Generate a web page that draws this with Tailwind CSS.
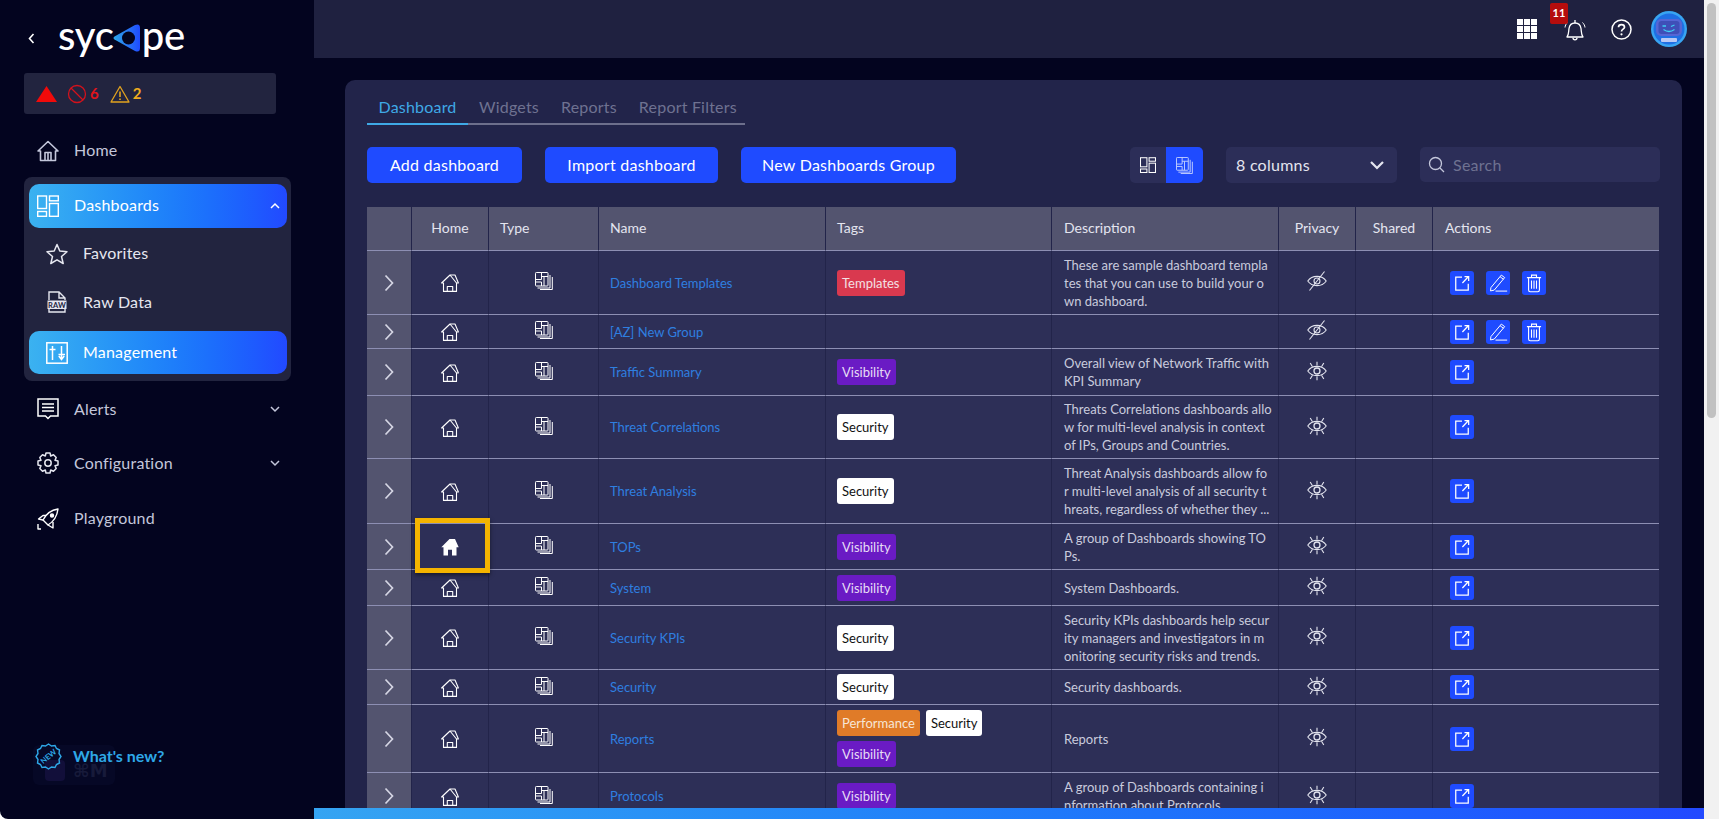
<!DOCTYPE html>
<html lang="en">

<head>
    <meta charset="UTF-8" />
    <title>Dashboards - Sycope</title>
    <script src="https://cdn.jsdelivr.net/npm/@tailwindcss/browser@4"></script>
</head>

<body class="bg-white h-[819px] overflow-hidden font-['Lato',sans-serif]">

    <!-- Shared icons -->
    <svg class="hidden">
        <symbol id="i-house" viewBox="0 0 18 18" fill="none" stroke="currentColor" stroke-width="1.100" stroke-linejoin="round">
            <path d="M0.600 9 9 1H14L17.400 9H15.500V17.400H2.500V9Z" />
            <path d="M9 1 15.500 9" />
            <path d="M6.300 17.400V12.500H11.700V17.400" />
        </symbol>
        <symbol id="i-house-solid" viewBox="0 0 18 18" fill="currentColor">
            <path d="M0.300 9.200 8.500 1H14L17.700 9.200H15.500V17.500H11V11.800H7V17.500H2.500V9.200Z" />
        </symbol>
        <symbol id="i-type" viewBox="0 0 18 18" fill="none" stroke="currentColor" stroke-width="1">
            <rect x="0.500" y="0.500" width="12.500" height="13.500" rx="0.800" />
            <path d="M6.500 0.500V7.500H0.500M0.500 10H6.500V14M6.500 4.500H13M9 4.500V14" />
            <path d="M15 3V16H2.500" />
            <path d="M17.300 5V17.500H5" />
        </symbol>
        <symbol id="i-eye" viewBox="0 0 20 20" fill="none" stroke="currentColor" stroke-width="1.100">
            <path d="M0.800 10C5 3.800 15 3.800 19.200 10 15 16.200 5 16.200 0.800 10Z" />
            <circle cx="10" cy="10" r="3" stroke-width="1.300" />
            <path d="M10 0.800V4.500M3.200 2 5.500 5.800M16.800 2 14.500 5.800M10 15.500V19.200M3.200 18 5.500 14.200M16.800 18 14.500 14.200" />
        </symbol>
        <symbol id="i-eye-off" viewBox="0 0 20 20" fill="none" stroke="currentColor" stroke-width="1.100">
            <path d="M0.800 10C5 3.800 15 3.800 19.200 10 15 16.200 5 16.200 0.800 10Z" />
            <circle cx="10" cy="10" r="3" />
            <path d="M2.500 19.500 17.500 0.500" />
        </symbol>
        <symbol id="i-open" viewBox="0 0 24 24" fill="none" stroke="white" stroke-width="1.500">
            <path d="M12 5H4.500V20.500H19.500V13" />
            <path d="M12.500 12 19.500 4.500M15 4.200H20V9.500" />
        </symbol>
        <symbol id="i-edit" viewBox="0 0 24 24" fill="none" stroke="white" stroke-width="1.200" stroke-linejoin="round">
            <path d="M3.500 17.500 16 2.500 20 5.500 7.500 20.500 3 21.500Z" />
            <path d="M14.500 4.500 18.500 7.500M9 21.700H23" />
        </symbol>
        <symbol id="i-trash" viewBox="0 0 24 24" fill="none" stroke="white" stroke-width="1.300">
            <path d="M3.500 5.500H20.500M9 5.500V2.500H15V5.500" />
            <path d="M5.500 5.500V20.500Q5.500 22.500 7.500 22.500H16.500Q18.500 22.500 18.500 20.500V5.500" />
            <path d="M9 9V19M12 9V19M15 9V19" />
        </symbol>
        <symbol id="i-right" viewBox="0 0 10 18" fill="none" stroke="currentColor" stroke-width="1.700">
            <path d="M1.500 1.500 8.500 9 1.500 16.500" />
        </symbol>
        <symbol id="i-down" viewBox="0 0 12 8" fill="none" stroke="currentColor" stroke-width="1.500">
            <path d="M2 2 6 6 10 2" />
        </symbol>
        <symbol id="i-dash" viewBox="0 0 22 22" fill="none" stroke="currentColor" stroke-width="1.400">
            <rect x="0.700" y="1" width="8.800" height="12.500" />
            <rect x="0.700" y="16.500" width="8.800" height="4.800" />
            <rect x="12.500" y="1" width="8.800" height="4.800" />
            <rect x="12.500" y="8.500" width="8.800" height="12.800" />
        </symbol>
    </svg>

    <div class="flex h-[819px]">

        <!-- Sidebar -->
        <aside class="relative w-[314px] shrink-0 h-full bg-[#03041f] rounded-bl-lg flex flex-col text-[16px] tracking-[0.2px] text-[#c4c7db]">
            <div class="flex items-center h-[32px] mt-[22px] pl-[28px]">
                <svg class="w-[7px] h-[11px] text-white" viewBox="0 0 7 11" fill="none" stroke="currentColor" stroke-width="1.600">
                    <path d="M5.500 1 1.500 5.500 5.500 10" />
                </svg>
                <div class="ml-[23px] flex items-center text-white text-[40px] font-medium leading-[32px] tracking-[-0.2px]">
                    <span class="-translate-y-[3px]">syc</span>
                    <svg class="w-[28px] h-[30px] -mx-[1px]" viewBox="0 0 28 30">
                        <defs>
                            <linearGradient id="logoFill" x1="0" y1="0" x2="1" y2="0">
                                <stop offset="0" stop-color="#2fa8e8" />
                                <stop offset="1" stop-color="#1f4bff" />
                            </linearGradient>
                        </defs>
                        <path d="M1.500 13.500 22 2Q27 0 27 5V25Q27 30 22 28L1.500 16.500Q-0.500 15 1.500 13.500Z" fill="url(#logoFill)" />
                        <circle cx="15.500" cy="15" r="6.500" fill="#03041f" />
                    </svg>
                    <span class="ml-[2px] -translate-y-[3px]">pe</span>
                </div>
            </div>

            <!-- Status box -->
            <div class="mt-[19px] ml-[24px] w-[252px] h-[41px] rounded-[3px] bg-[#22243f] flex items-center pl-[12px] font-bold text-[15px] tracking-normal">
                <svg class="w-[21px] h-[16px]" viewBox="0 0 21 16"><path d="M10.500 0 21 16H0Z" fill="#f00a0a" /></svg>
                <svg class="w-[20px] h-[20px] ml-[10px]" viewBox="0 0 20 20" fill="none" stroke="#d3121c" stroke-width="1.300">
                    <circle cx="10" cy="10" r="8.500" />
                    <path d="M4 4 16 16" />
                </svg>
                <span class="ml-[3px] text-[#e0151b]">6</span>
                <svg class="w-[20px] h-[18px] ml-[11px]" viewBox="0 0 20 18" fill="none" stroke="#e2a21f" stroke-width="1.300">
                    <path d="M10 1.500 19 17H1Z" stroke-linejoin="round" />
                    <path d="M10 6.500V12M10 13.500V15" stroke-width="1.600" />
                </svg>
                <span class="ml-[3px] text-[#f0ac1e]">2</span>
            </div>

            <a class="mt-[15px] ml-[29px] h-[44px] flex items-center pl-[8px] gap-[15px]">
                <svg class="w-[22px] h-[22px]" viewBox="0 0 22 22" fill="none" stroke="currentColor" stroke-width="1.600" stroke-linejoin="round">
                    <path d="M1 11 11 1.500 21 11H18.500V20.500H3.500V11Z" />
                    <path d="M8 20.500V12.500H14V20.500M11 12.500V20.500" />
                </svg>
                <span class="-mt-[2px]">Home</span>
            </a>

            <!-- Dashboards group -->
            <div class="mt-[4px] ml-[24px] w-[267px] h-[204px] rounded-lg bg-[#22243f] p-[7px_5px]">
                <a class="h-[44px] w-[258px] rounded-[10px] bg-gradient-to-r from-[#3bb2f0] to-[#2249ff] text-white flex items-center pl-[8px] gap-[15px]">
                    <svg class="w-[22px] h-[22px]"><use href="#i-dash" /></svg>
                    <span class="-mt-[2px]">Dashboards</span>
                    <svg class="w-[12px] h-[8px] ml-auto mr-[6px] rotate-180"><use href="#i-down" /></svg>
                </a>
                <a class="mt-[2px] h-[48px] flex items-center pl-[17px] gap-[15px] text-[#e6e7f0]">
                    <svg class="w-[22px] h-[22px]" viewBox="0 0 22 22" fill="none" stroke="currentColor" stroke-width="1.500" stroke-linejoin="round">
                        <path d="M11 1.500 13.800 8 21 8.700 15.500 13.500 17.200 20.500 11 16.800 4.800 20.500 6.500 13.500 1 8.700 8.200 8Z" />
                    </svg>
                    <span class="-mt-[2px]">Favorites</span>
                </a>
                <a class="h-[48px] flex items-center pl-[18px] gap-[16px] text-[#e6e7f0]">
                    <svg class="w-[20px] h-[22px]" viewBox="0 0 20 22" fill="none" stroke="currentColor" stroke-width="1.400">
                        <path d="M2 9V1H12L18 7V9M12 1V7H18M2 18V21H18V18" />
                        <rect x="0.500" y="9.500" width="19" height="8.500" fill="currentColor" stroke="none" />
                        <text x="10" y="16.600" text-anchor="middle" font-size="7.500" font-weight="700" fill="#22243f" stroke="none">RAW</text>
                    </svg>
                    <span>Raw Data</span>
                </a>
                <a class="mt-[5px] h-[43px] w-[258px] rounded-[10px] bg-gradient-to-r from-[#3bb2f0] to-[#2249ff] text-white flex items-center pl-[17px] gap-[15px]">
                    <svg class="w-[22px] h-[22px]" viewBox="0 0 22 22" fill="none" stroke="currentColor" stroke-width="1.500">
                        <rect x="0.800" y="0.800" width="20.400" height="20.400" />
                        <path d="M6.500 4V18M3.500 7.500H9.500M15.500 4V17M12.500 12.500H19M12.800 14 15.500 17.500 18.200 14" />
                    </svg>
                    <span class="-mt-[2px]">Management</span>
                </a>
            </div>

            <a class="mt-[6px] ml-[29px] w-[258px] h-[44px] flex items-center pl-[8px] gap-[15px]">
                <svg class="w-[22px] h-[22px] text-white" viewBox="0 0 22 22" fill="none" stroke="currentColor" stroke-width="1.500">
                    <path d="M1 1H21V18H13.500L11 20.500 8.500 18H1Z" />
                    <path d="M5 6H17M5 9.500H17M5 13H17" />
                </svg>
                <span>Alerts</span>
                <svg class="w-[12px] h-[8px] ml-auto mr-[6px]"><use href="#i-down" /></svg>
            </a>
            <a class="mt-[10px] ml-[29px] w-[258px] h-[44px] flex items-center pl-[8px] gap-[15px]">
                <svg class="w-[22px] h-[22px] text-[#e6e7f0]" viewBox="0 0 22 22" fill="none" stroke="currentColor" stroke-width="1.500" stroke-linejoin="round">
                    <path d="M9 1H13L13.700 4 16.500 2.800 19.200 5.500 18 8.300 21 9V13L18 13.700 19.200 16.500 16.500 19.200 13.700 18 13 21H9L8.300 18 5.500 19.200 2.800 16.500 4 13.700 1 13V9L4 8.300 2.800 5.500 5.500 2.800 8.300 4Z" />
                    <circle cx="11" cy="11" r="3.200" />
                </svg>
                <span>Configuration</span>
                <svg class="w-[12px] h-[8px] ml-auto mr-[6px]"><use href="#i-down" /></svg>
            </a>
            <a class="mt-[12px] ml-[29px] w-[258px] h-[44px] flex items-center pl-[8px] gap-[15px]">
                <svg class="w-[22px] h-[22px] text-white" viewBox="0 0 22 22" fill="none" stroke="currentColor" stroke-width="1.400" stroke-linejoin="round">
                    <path d="M21 1C14 2 9 6 6 12L11 17C16 14 20 9 21 1Z" />
                    <path d="M6 12 1.500 11 6 7.500H9M11 17 16 20V14" />
                    <circle cx="15" cy="7.500" r="1.500" fill="currentColor" />
                    <path d="M1 16V21H4" />
                </svg>
                <span class="-mt-[2px]">Playground</span>
            </a>

            <!-- Keyboard hint behind the What's new link -->
            <div class="absolute left-[33px] top-[745px] w-[82px] h-[40px] rounded-md bg-[#060826] flex items-center">
                <div class="ml-[12px] w-[20px] h-[21px] mt-[10px] rounded bg-[#120f3a]"></div>
                <span class="ml-[8px] mt-[10px] font-['DejaVu_Sans',sans-serif] font-bold text-[18px] tracking-normal text-[#171a3a]">⌘M</span>
            </div>
            <a class="absolute left-[35px] top-[743px] h-[26px] flex items-center gap-[11px] font-bold text-[#2ea8e8] text-[16px] tracking-normal">
                <svg class="w-[27px] h-[27px]" viewBox="0 0 27 27" fill="none" stroke="currentColor" stroke-width="1.400">
                    <path d="M13.500 1 16.500 3 20 2.500 21.500 5.500 24.500 7 24 10.500 26 13.500 24 16.500 24.500 20 21.500 21.500 20 24.500 16.500 24 13.500 26 10.500 24 7 24.500 5.500 21.500 2.500 20 3 16.500 1 13.500 3 10.500 2.500 7 5.500 5.500 7 2.500 10.500 3Z" />
                    <text x="13.500" y="16" text-anchor="middle" font-size="7.500" font-weight="700" fill="currentColor" stroke="none" transform="rotate(-40 13.500 13.500)">NEW</text>
                </svg>
                <span>What's new?</span>
            </a>
        </aside>

        <!-- Main area -->
        <main class="relative flex-1 min-w-0 bg-[#03041f] overflow-hidden">
            <header class="h-[58px] bg-[#1f2140] flex items-center justify-end text-white">
                <svg class="w-[20px] h-[20px]" viewBox="0 0 20 20" fill="white">
                    <rect width="6" height="6" /><rect x="7" width="6" height="6" /><rect x="14" width="6" height="6" />
                    <rect y="7" width="6" height="6" /><rect x="7" y="7" width="6" height="6" /><rect x="14" y="7" width="6" height="6" />
                    <rect y="14" width="6" height="6" /><rect x="7" y="14" width="6" height="6" /><rect x="14" y="14" width="6" height="6" />
                </svg>
                <div class="relative ml-[27px] w-[22px] h-[23px] mt-[2px]">
                    <svg class="w-[22px] h-[23px]" viewBox="0 0 22 23" fill="none" stroke="white" stroke-width="1.300">
                        <path d="M3 18C5 15.500 4.500 12.500 5 9.500 5.500 6 8 4 11 4S16.500 6 17 9.500C17.500 12.500 17 15.500 19 18Z" stroke-linejoin="round" />
                        <path d="M11 1V4M9 18.800A2 2 0 0 0 13 18.800" />
                        <path d="M18.500 3.500C20 5 20.800 6.500 21 8.500M3.500 3.500C2 5 1.200 6.500 1 8.500" stroke-width="1" />
                    </svg>
                    <span class="absolute -top-[16px] -left-[14px] w-[18px] h-[21px] rounded-[2px] bg-[#b50d0d] text-white text-[11px] font-bold flex items-center justify-center">11</span>
                </div>
                <svg class="ml-[25px] w-[21px] h-[21px]" viewBox="0 0 21 21" fill="none" stroke="white" stroke-width="1.500">
                    <circle cx="10.500" cy="10.500" r="9.500" />
                    <path d="M7.500 8.200C7.500 4.800 13.500 4.800 13.500 8.200 13.500 10.200 10.500 10.200 10.500 12.500" stroke-width="1.700" />
                    <circle cx="10.500" cy="15.300" r="1.100" fill="white" stroke="none" />
                </svg>
                <svg class="ml-[19px] mr-[17px] w-[36px] h-[36px]" viewBox="0 0 36 36">
                    <circle cx="18" cy="18" r="18" fill="#38a5f2" />
                    <circle cx="18" cy="18" r="15.500" fill="#1f6fe4" />
                    <rect x="5" y="8" width="26" height="17" rx="5" fill="#5566d4" />
                    <rect x="7.500" y="10" width="21" height="13" rx="3" fill="#3f4fb8" />
                    <path d="M11.500 15H15M20 15.500 23.500 14M12.500 18.500Q18 22.500 23.500 18.500" fill="none" stroke="#3fd0f5" stroke-width="1.300" />
                    <rect x="10" y="27" width="16" height="4" rx="1" fill="#b9c9f5" />
                </svg>
            </header>

            <div class="pt-[22px] pl-[31px] pr-[22px]">
                <section class="w-[1337px] h-[800px] rounded-[10px] bg-[#22244a] pl-[22px] pt-[12px]">

                    <!-- Tabs -->
                    <nav class="w-[378px] h-[33px] border-b-2 border-[#6d6f8c] flex whitespace-nowrap text-[16px] tracking-[0.2px] text-[#6f7291]">
                        <a class="h-[33px] w-[101px] text-center pt-[3px] border-b-2 border-[#3fa9e6] text-[#3fa9e6]">Dashboard</a>
                        <a class="pl-[11px] pr-[11px] pt-[3px]">Widgets</a>
                        <a class="pl-[11px] pr-[11px] pt-[3px]">Reports</a>
                        <a class="pl-[11px] pt-[3px]">Report Filters</a>
                    </nav>

                    <!-- Toolbar -->
                    <div class="mt-[22px] flex h-[36px] w-[1293px] text-white text-[16px] tracking-[0.25px]">
                        <button class="w-[155px] rounded-[5px] bg-[#1f4bff]">Add dashboard</button>
                        <button class="ml-[23px] w-[173px] rounded-[5px] bg-[#1f4bff]">Import dashboard</button>
                        <button class="ml-[23px] w-[215px] rounded-[5px] bg-[#1f4bff]">New Dashboards Group</button>
                        <div class="ml-auto w-[73px] rounded-[5px] bg-[#2c2e58] flex overflow-hidden">
                            <span class="w-[36px] flex items-center justify-center">
                                <svg class="w-[16px] h-[16px] text-white"><use href="#i-dash" /></svg>
                            </span>
                            <span class="w-[37px] bg-[#1f4bff] flex items-center justify-center text-[#c5d1ff]">
                                <svg class="w-[17px] h-[17px]"><use href="#i-type" /></svg>
                            </span>
                        </div>
                        <div class="ml-[23px] w-[171px] rounded-[5px] bg-[#2c2e58] flex items-center pl-[10px] text-[#e4e5ef]">
                            <span>8 columns</span>
                            <svg class="ml-auto mr-[11px] w-[18px] h-[12px]"><use href="#i-down" /></svg>
                        </div>
                        <div class="ml-[23px] w-[240px] h-[35px] rounded-[5px] bg-[#2c2e58] flex items-center pl-[8px] text-[#6f7291]">
                            <svg class="w-[17px] h-[17px] text-[#c4c7db]" viewBox="0 0 17 17" fill="none" stroke="currentColor" stroke-width="1.300">
                                <circle cx="7.500" cy="7.500" r="6" />
                                <path d="M12 12 16 16" />
                            </svg>
                            <span class="ml-[8px]">Search</span>
                        </div>
                    </div>

                    <!-- Dashboards table -->
                    <div class="relative mt-[24px] w-[1292px]">
                        <table class="table-fixed w-[1292px] border-separate border-spacing-0 text-[13px] text-[#c9cbdd]">
                            <colgroup>
                                <col class="w-[44px]" /><col class="w-[77px]" /><col class="w-[110px]" /><col class="w-[227px]" /><col class="w-[226px]" /><col class="w-[227px]" /><col class="w-[77px]" /><col class="w-[77px]" /><col class="w-[227px]" />
                            </colgroup>
                            <thead class="bg-[#53546f] text-[#e4e5ef] text-[14px] font-normal text-left">
                                <tr class="h-[44px]">
                                    <th class="font-normal border-b border-[#8d8fb3]"></th>
                                    <th class="font-normal pb-[2px] border-b border-l border-b-[#8d8fb3] border-l-[#22244a] text-center">Home</th>
                                    <th class="font-normal pb-[2px] border-b border-l border-b-[#8d8fb3] border-l-[#22244a] pl-[11px]">Type</th>
                                    <th class="font-normal pb-[2px] border-b border-l border-b-[#8d8fb3] border-l-[#22244a] pl-[11px]">Name</th>
                                    <th class="font-normal pb-[2px] border-b border-l border-b-[#8d8fb3] border-l-[#22244a] pl-[11px]">Tags</th>
                                    <th class="font-normal pb-[2px] border-b border-l border-b-[#8d8fb3] border-l-[#22244a] pl-[12px]">Description</th>
                                    <th class="font-normal pb-[2px] border-b border-l border-b-[#8d8fb3] border-l-[#22244a] text-center">Privacy</th>
                                    <th class="font-normal pb-[2px] border-b border-l border-b-[#8d8fb3] border-l-[#22244a] text-center">Shared</th>
                                    <th class="font-normal pb-[2px] border-b border-l border-b-[#8d8fb3] border-l-[#22244a] pl-[12px]">Actions</th>
                                </tr>
                            </thead>
                            <tbody class="bg-[#2d2f57] [&_td]:border-b [&_td]:border-b-[#8d8fb3] [&_td+td]:border-l [&_td+td]:border-l-[#22244a]">
                                <tr class="h-[64px]">
                                    <td class="bg-[#53546f] text-[#d5d6e4]"><svg class="w-[10px] h-[18px] mx-auto"><use href="#i-right" /></svg></td>
                                    <td class="text-white"><svg class="w-[18px] h-[18px] mx-auto mt-[1px]"><use href="#i-house" /></svg></td>
                                    <td class="text-white"><svg class="w-[18px] h-[18px] mx-auto -mt-[3px]"><use href="#i-type" /></svg></td>
                                    <td class="pl-[11px] pt-[2px] text-[#2f7fe0]">Dashboard Templates</td>
                                    <td class="pl-[11px]"><span class="inline-block h-[26px] leading-[26px] px-[5px] rounded-[3px] bg-[#d9394f] text-[#f3e0e4]">Templates</span></td>
                                    <td class="pl-[12px] leading-[18px] whitespace-nowrap">These are sample dashboard templa<br />tes that you can use to build your o<br />wn dashboard.</td>
                                    <td class="text-[#e4e5ef]"><svg class="w-[20px] h-[20px] mx-auto -mt-[3px]"><use href="#i-eye-off" /></svg></td>
                                    <td></td>
                                    <td class="pl-[17px]"><div class="flex gap-[12px]">
                                        <span class="w-[24px] h-[24px] rounded-[3px] bg-[#1f4bff] flex items-center justify-center"><svg class="w-[20px] h-[20px]"><use href="#i-open" /></svg></span>
                                        <span class="w-[24px] h-[24px] rounded-[3px] bg-[#1f4bff] flex items-center justify-center"><svg class="w-[20px] h-[20px]"><use href="#i-edit" /></svg></span>
                                        <span class="w-[24px] h-[24px] rounded-[3px] bg-[#1f4bff] flex items-center justify-center"><svg class="w-[20px] h-[20px]"><use href="#i-trash" /></svg></span>
                                    </div></td>
                                </tr>
                                <tr class="h-[34px]">
                                    <td class="bg-[#53546f] text-[#d5d6e4]"><svg class="w-[10px] h-[18px] mx-auto"><use href="#i-right" /></svg></td>
                                    <td class="text-white"><svg class="w-[18px] h-[18px] mx-auto mt-[1px]"><use href="#i-house" /></svg></td>
                                    <td class="text-white"><svg class="w-[18px] h-[18px] mx-auto -mt-[3px]"><use href="#i-type" /></svg></td>
                                    <td class="pl-[11px] pt-[2px] text-[#2f7fe0]">[AZ] New Group</td>
                                    <td></td>
                                    <td></td>
                                    <td class="text-[#e4e5ef]"><svg class="w-[20px] h-[20px] mx-auto -mt-[3px]"><use href="#i-eye-off" /></svg></td>
                                    <td></td>
                                    <td class="pl-[17px]"><div class="flex gap-[12px]">
                                        <span class="w-[24px] h-[24px] rounded-[3px] bg-[#1f4bff] flex items-center justify-center"><svg class="w-[20px] h-[20px]"><use href="#i-open" /></svg></span>
                                        <span class="w-[24px] h-[24px] rounded-[3px] bg-[#1f4bff] flex items-center justify-center"><svg class="w-[20px] h-[20px]"><use href="#i-edit" /></svg></span>
                                        <span class="w-[24px] h-[24px] rounded-[3px] bg-[#1f4bff] flex items-center justify-center"><svg class="w-[20px] h-[20px]"><use href="#i-trash" /></svg></span>
                                    </div></td>
                                </tr>
                                <tr class="h-[47px]">
                                    <td class="bg-[#53546f] text-[#d5d6e4]"><svg class="w-[10px] h-[18px] mx-auto"><use href="#i-right" /></svg></td>
                                    <td class="text-white"><svg class="w-[18px] h-[18px] mx-auto mt-[1px]"><use href="#i-house" /></svg></td>
                                    <td class="text-white"><svg class="w-[18px] h-[18px] mx-auto -mt-[3px]"><use href="#i-type" /></svg></td>
                                    <td class="pl-[11px] pt-[2px] text-[#2f7fe0]">Traffic Summary</td>
                                    <td class="pl-[11px]"><span class="inline-block h-[26px] leading-[26px] px-[5px] rounded-[3px] bg-[#6a1bc4] text-[#e6dcf5]">Visibility</span></td>
                                    <td class="pl-[12px] leading-[18px] whitespace-nowrap">Overall view of Network Traffic with<br />KPI Summary</td>
                                    <td class="text-[#e4e5ef]"><svg class="w-[20px] h-[20px] mx-auto -mt-[3px]"><use href="#i-eye" /></svg></td>
                                    <td></td>
                                    <td class="pl-[17px]"><span class="w-[24px] h-[24px] rounded-[3px] bg-[#1f4bff] flex items-center justify-center"><svg class="w-[20px] h-[20px]"><use href="#i-open" /></svg></span></td>
                                </tr>
                                <tr class="h-[63px]">
                                    <td class="bg-[#53546f] text-[#d5d6e4]"><svg class="w-[10px] h-[18px] mx-auto"><use href="#i-right" /></svg></td>
                                    <td class="text-white"><svg class="w-[18px] h-[18px] mx-auto mt-[1px]"><use href="#i-house" /></svg></td>
                                    <td class="text-white"><svg class="w-[18px] h-[18px] mx-auto -mt-[3px]"><use href="#i-type" /></svg></td>
                                    <td class="pl-[11px] pt-[2px] text-[#2f7fe0]">Threat Correlations</td>
                                    <td class="pl-[11px]"><span class="inline-block h-[26px] leading-[26px] px-[5px] rounded-[3px] bg-white text-[#111]">Security</span></td>
                                    <td class="pl-[12px] leading-[18px] whitespace-nowrap">Threats Correlations dashboards allo<br />w for multi-level analysis in context<br />of IPs, Groups and Countries.</td>
                                    <td class="text-[#e4e5ef]"><svg class="w-[20px] h-[20px] mx-auto -mt-[3px]"><use href="#i-eye" /></svg></td>
                                    <td></td>
                                    <td class="pl-[17px]"><span class="w-[24px] h-[24px] rounded-[3px] bg-[#1f4bff] flex items-center justify-center"><svg class="w-[20px] h-[20px]"><use href="#i-open" /></svg></span></td>
                                </tr>
                                <tr class="h-[65px]">
                                    <td class="bg-[#53546f] text-[#d5d6e4]"><svg class="w-[10px] h-[18px] mx-auto"><use href="#i-right" /></svg></td>
                                    <td class="text-white"><svg class="w-[18px] h-[18px] mx-auto mt-[1px]"><use href="#i-house" /></svg></td>
                                    <td class="text-white"><svg class="w-[18px] h-[18px] mx-auto -mt-[3px]"><use href="#i-type" /></svg></td>
                                    <td class="pl-[11px] pt-[2px] text-[#2f7fe0]">Threat Analysis</td>
                                    <td class="pl-[11px]"><span class="inline-block h-[26px] leading-[26px] px-[5px] rounded-[3px] bg-white text-[#111]">Security</span></td>
                                    <td class="pl-[12px] leading-[18px] whitespace-nowrap">Threat Analysis dashboards allow fo<br />r multi-level analysis of all security t<br />hreats, regardless of whether they ...</td>
                                    <td class="text-[#e4e5ef]"><svg class="w-[20px] h-[20px] mx-auto -mt-[3px]"><use href="#i-eye" /></svg></td>
                                    <td></td>
                                    <td class="pl-[17px]"><span class="w-[24px] h-[24px] rounded-[3px] bg-[#1f4bff] flex items-center justify-center"><svg class="w-[20px] h-[20px]"><use href="#i-open" /></svg></span></td>
                                </tr>
                                <tr class="h-[46px]">
                                    <td class="bg-[#53546f] text-[#d5d6e4]"><svg class="w-[10px] h-[18px] mx-auto"><use href="#i-right" /></svg></td>
                                    <td class="text-white"><svg class="w-[18px] h-[18px] mx-auto"><use href="#i-house-solid" /></svg></td>
                                    <td class="text-white"><svg class="w-[18px] h-[18px] mx-auto -mt-[3px]"><use href="#i-type" /></svg></td>
                                    <td class="pl-[11px] pt-[2px] text-[#2f7fe0]">TOPs</td>
                                    <td class="pl-[11px]"><span class="inline-block h-[26px] leading-[26px] px-[5px] rounded-[3px] bg-[#6a1bc4] text-[#e6dcf5]">Visibility</span></td>
                                    <td class="pl-[12px] leading-[18px] whitespace-nowrap">A group of Dashboards showing TO<br />Ps.</td>
                                    <td class="text-[#e4e5ef]"><svg class="w-[20px] h-[20px] mx-auto -mt-[3px]"><use href="#i-eye" /></svg></td>
                                    <td></td>
                                    <td class="pl-[17px]"><span class="w-[24px] h-[24px] rounded-[3px] bg-[#1f4bff] flex items-center justify-center"><svg class="w-[20px] h-[20px]"><use href="#i-open" /></svg></span></td>
                                </tr>
                                <tr class="h-[36px]">
                                    <td class="bg-[#53546f] text-[#d5d6e4]"><svg class="w-[10px] h-[18px] mx-auto"><use href="#i-right" /></svg></td>
                                    <td class="text-white"><svg class="w-[18px] h-[18px] mx-auto mt-[1px]"><use href="#i-house" /></svg></td>
                                    <td class="text-white"><svg class="w-[18px] h-[18px] mx-auto -mt-[3px]"><use href="#i-type" /></svg></td>
                                    <td class="pl-[11px] pt-[2px] text-[#2f7fe0]">System</td>
                                    <td class="pl-[11px]"><span class="inline-block h-[26px] leading-[26px] px-[5px] rounded-[3px] bg-[#6a1bc4] text-[#e6dcf5]">Visibility</span></td>
                                    <td class="pl-[12px] leading-[18px] whitespace-nowrap">System Dashboards.</td>
                                    <td class="text-[#e4e5ef]"><svg class="w-[20px] h-[20px] mx-auto -mt-[3px]"><use href="#i-eye" /></svg></td>
                                    <td></td>
                                    <td class="pl-[17px]"><span class="w-[24px] h-[24px] rounded-[3px] bg-[#1f4bff] flex items-center justify-center"><svg class="w-[20px] h-[20px]"><use href="#i-open" /></svg></span></td>
                                </tr>
                                <tr class="h-[64px]">
                                    <td class="bg-[#53546f] text-[#d5d6e4]"><svg class="w-[10px] h-[18px] mx-auto"><use href="#i-right" /></svg></td>
                                    <td class="text-white"><svg class="w-[18px] h-[18px] mx-auto mt-[1px]"><use href="#i-house" /></svg></td>
                                    <td class="text-white"><svg class="w-[18px] h-[18px] mx-auto -mt-[3px]"><use href="#i-type" /></svg></td>
                                    <td class="pl-[11px] pt-[2px] text-[#2f7fe0]">Security KPIs</td>
                                    <td class="pl-[11px]"><span class="inline-block h-[26px] leading-[26px] px-[5px] rounded-[3px] bg-white text-[#111]">Security</span></td>
                                    <td class="pl-[12px] leading-[18px] whitespace-nowrap">Security KPIs dashboards help secur<br />ity managers and investigators in m<br />onitoring security risks and trends.</td>
                                    <td class="text-[#e4e5ef]"><svg class="w-[20px] h-[20px] mx-auto -mt-[3px]"><use href="#i-eye" /></svg></td>
                                    <td></td>
                                    <td class="pl-[17px]"><span class="w-[24px] h-[24px] rounded-[3px] bg-[#1f4bff] flex items-center justify-center"><svg class="w-[20px] h-[20px]"><use href="#i-open" /></svg></span></td>
                                </tr>
                                <tr class="h-[35px]">
                                    <td class="bg-[#53546f] text-[#d5d6e4]"><svg class="w-[10px] h-[18px] mx-auto"><use href="#i-right" /></svg></td>
                                    <td class="text-white"><svg class="w-[18px] h-[18px] mx-auto mt-[1px]"><use href="#i-house" /></svg></td>
                                    <td class="text-white"><svg class="w-[18px] h-[18px] mx-auto -mt-[3px]"><use href="#i-type" /></svg></td>
                                    <td class="pl-[11px] pt-[2px] text-[#2f7fe0]">Security</td>
                                    <td class="pl-[11px]"><span class="inline-block h-[26px] leading-[26px] px-[5px] rounded-[3px] bg-white text-[#111]">Security</span></td>
                                    <td class="pl-[12px] leading-[18px] whitespace-nowrap">Security dashboards.</td>
                                    <td class="text-[#e4e5ef]"><svg class="w-[20px] h-[20px] mx-auto -mt-[3px]"><use href="#i-eye" /></svg></td>
                                    <td></td>
                                    <td class="pl-[17px]"><span class="w-[24px] h-[24px] rounded-[3px] bg-[#1f4bff] flex items-center justify-center"><svg class="w-[20px] h-[20px]"><use href="#i-open" /></svg></span></td>
                                </tr>
                                <tr class="h-[68px]">
                                    <td class="bg-[#53546f] text-[#d5d6e4]"><svg class="w-[10px] h-[18px] mx-auto"><use href="#i-right" /></svg></td>
                                    <td class="text-white"><svg class="w-[18px] h-[18px] mx-auto mt-[1px]"><use href="#i-house" /></svg></td>
                                    <td class="text-white"><svg class="w-[18px] h-[18px] mx-auto -mt-[3px]"><use href="#i-type" /></svg></td>
                                    <td class="pl-[11px] pt-[2px] text-[#2f7fe0]">Reports</td>
                                    <td class="pl-[11px]"><div class="flex flex-wrap gap-x-[6px] gap-y-[5px] w-[160px]">
                                        <span class="h-[26px] leading-[26px] px-[5px] rounded-[3px] bg-[#e07b28] text-[#f7e6d6]">Performance</span>
                                        <span class="h-[26px] leading-[26px] px-[5px] rounded-[3px] bg-white text-[#111]">Security</span>
                                        <span class="h-[26px] leading-[26px] px-[5px] rounded-[3px] bg-[#6a1bc4] text-[#e6dcf5]">Visibility</span>
                                    </div></td>
                                    <td class="pl-[12px] leading-[18px] whitespace-nowrap">Reports</td>
                                    <td class="text-[#e4e5ef]"><svg class="w-[20px] h-[20px] mx-auto -mt-[3px]"><use href="#i-eye" /></svg></td>
                                    <td></td>
                                    <td class="pl-[17px]"><span class="w-[24px] h-[24px] rounded-[3px] bg-[#1f4bff] flex items-center justify-center"><svg class="w-[20px] h-[20px]"><use href="#i-open" /></svg></span></td>
                                </tr>
                                <tr class="h-[47px]">
                                    <td class="bg-[#53546f] text-[#d5d6e4]"><svg class="w-[10px] h-[18px] mx-auto"><use href="#i-right" /></svg></td>
                                    <td class="text-white"><svg class="w-[18px] h-[18px] mx-auto mt-[1px]"><use href="#i-house" /></svg></td>
                                    <td class="text-white"><svg class="w-[18px] h-[18px] mx-auto -mt-[3px]"><use href="#i-type" /></svg></td>
                                    <td class="pl-[11px] pt-[2px] text-[#2f7fe0]">Protocols</td>
                                    <td class="pl-[11px]"><span class="inline-block h-[26px] leading-[26px] px-[5px] rounded-[3px] bg-[#6a1bc4] text-[#e6dcf5]">Visibility</span></td>
                                    <td class="pl-[12px] leading-[18px] whitespace-nowrap">A group of Dashboards containing i<br />nformation about Protocols.</td>
                                    <td class="text-[#e4e5ef]"><svg class="w-[20px] h-[20px] mx-auto -mt-[3px]"><use href="#i-eye" /></svg></td>
                                    <td></td>
                                    <td class="pl-[17px]"><span class="w-[24px] h-[24px] rounded-[3px] bg-[#1f4bff] flex items-center justify-center"><svg class="w-[20px] h-[20px]"><use href="#i-open" /></svg></span></td>
                                </tr>
                            </tbody>
                        </table>
                        <!-- Callout around the TOPs home icon -->
                        <div class="absolute left-[48px] top-[311px] w-[75px] h-[55px] border-[5px] border-[#f5b400] shadow-[0_2px_4px_rgba(0,0,0,0.5)]"></div>
                    </div>
                </section>
            </div>

            <!-- Bottom progress bar -->
            <div class="absolute left-0 right-0 bottom-0 h-[11px] bg-gradient-to-r from-[#35a4f2] to-[#2249ff]"></div>
        </main>

        <!-- Browser scrollbar -->
        <div class="w-[15px] shrink-0 bg-[#f1f1f1] pt-[3px] px-[3px]">
            <div class="h-[415px] rounded-full bg-[#c1c1c1]"></div>
        </div>
    </div>
</body>

</html>
